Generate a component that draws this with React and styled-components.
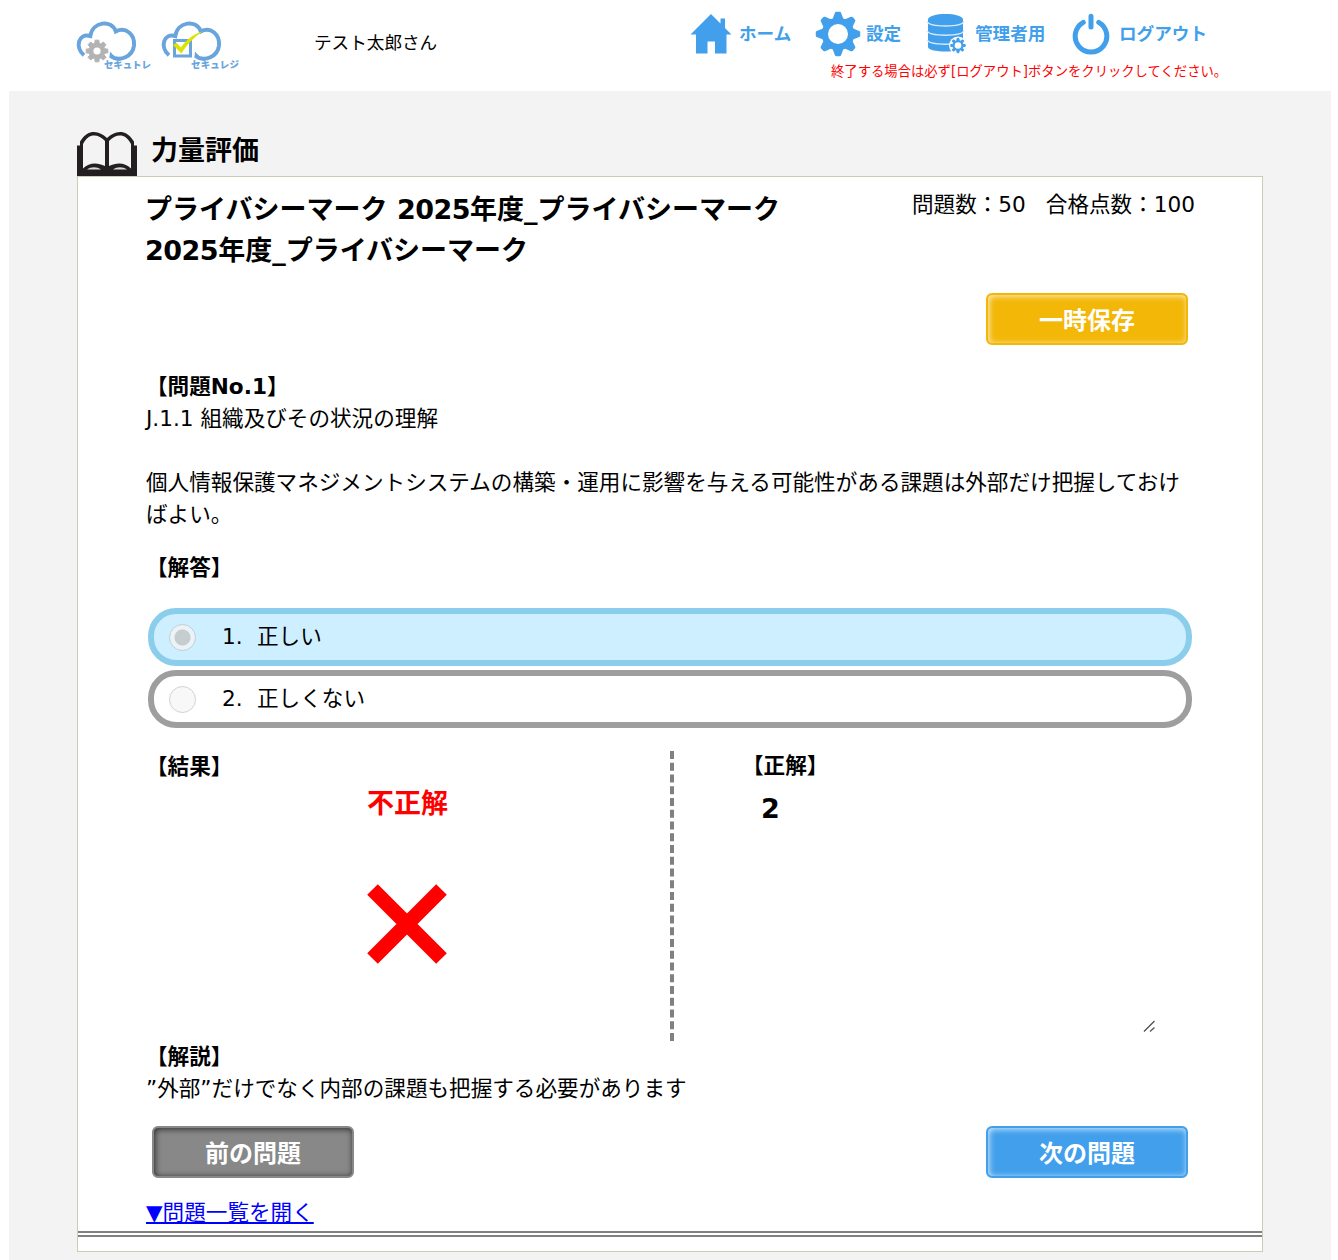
import React from 'react'
import styled, { createGlobalStyle } from 'styled-components'

const gearPath = (cx, cy, teeth, outer, inner, topW, baseW) => {
    const pts = []
    for (let i = 0; i < teeth; i++) {
        const a = (i * 2 * Math.PI) / teeth - Math.PI / 2
        const list = [[inner, -baseW], [outer, -topW], [outer, topW], [inner, baseW]]
        list.forEach(([r, d]) => {
            pts.push(`${(cx + r * Math.cos(a + d)).toFixed(2)} ${(cy + r * Math.sin(a + d)).toFixed(2)}`)
        })
    }
    return `M${pts.join('L')}Z`
}

const Cloud = () => (
    <path
        d="M10 38.2C0.5 30.5 4.5 15.5 16.3 19C18.5 4.5 37.5 2 41.8 14.4C52 9.5 61 17.5 60 28.5C58.8 39 46 46 36.3 38.8"
        fill="none"
        stroke="#69a5dc"
        strokeWidth="4"
        transform="translate(-2 -1)"
    />
)

const SecutoreLogo = () => (
    <svg width="78" height="54" viewBox="0 0 78 54">
        <Cloud />
        <path d="M34 33.5l5 5.5-5.5 0z" fill="#69a5dc" />
        <path d={gearPath(21, 33, 8, 11, 8, 0.17, 0.28)} fill="#b3b3b3" stroke="#b3b3b3" strokeWidth="1" strokeLinejoin="round" />
        <circle cx="21" cy="33" r="3.6" fill="#fff" />
        <LogoText x="28" y="49.5" textLength="47">セキュトレ</LogoText>
    </svg>
)

const SecuregiLogo = () => (
    <svg width="82" height="54" viewBox="0 0 82 54">
        <Cloud />
        <path d="M34 33.5l5 5.5-5.5 0z" fill="#69a5dc" />
        <rect x="13.5" y="22.5" width="16" height="15.5" fill="#fff" stroke="#69a5dc" strokeWidth="3" />
        <path d="M12 27l3.6-2.2 4.4 4.7C25 22 32 16 41.5 13.5 33 19 25.5 27 20.5 35.5z" fill="#dbe300" />
        <LogoText x="30" y="49.5" textLength="48">セキュレジ</LogoText>
    </svg>
)

const HomeIcon = () => (
    <svg width="42" height="42" viewBox="0 0 42 42">
        <path d="M21 1L30.5 10.5V5.5H35V15L41.5 21.5H36.5V40.5H25V28.5H17.5V40.5H6V21.5H.5Z" fill="#419fec" />
    </svg>
)

const GearIcon = () => (
    <svg width="46" height="46" viewBox="0 0 46 46">
        <path d={gearPath(23, 23, 8, 20.8, 15, 0.08, 0.27)} fill="#419fec" stroke="#419fec" strokeWidth="3" strokeLinejoin="round" />
        <circle cx="23" cy="23" r="10" fill="#fff" />
    </svg>
)

const DatabaseIcon = () => (
    <svg width="42" height="42" viewBox="0 0 42 42">
        <path d="M2 6.5C2 -1 37 -1 37 6.5V34C37 40 2 40 2 34Z" fill="#419fec" />
        <path d="M1 8.5C4 14.5 35 14.5 38 8.5M1 18C4 23.5 35 23.5 38 18M1 27C4 32.5 35 32.5 38 27" fill="none" stroke="#d5eafb" strokeWidth="1.5" />
        <circle cx="32" cy="32.5" r="9" fill="#fff" />
        <path d={gearPath(32, 32.5, 8, 7.3, 5, 0.12, 0.26)} fill="#419fec" stroke="#419fec" strokeWidth="1" />
        <circle cx="32" cy="32.5" r="3.3" fill="#fff" />
    </svg>
)

const PowerIcon = () => (
    <svg width="38" height="42" viewBox="0 0 38 42">
        <path d="M11.3 9.4A15.8 15.8 0 1 0 26.7 9.4M19 3.3V14" fill="none" stroke="#419fec" strokeWidth="5" strokeLinecap="round" />
    </svg>
)

const BookIcon = () => (
    <svg width="60" height="45" viewBox="0 0 60 45">
        <path d="M0 13.5H3V9.5C8 2 12 0 17 0C22 0 26 2.500 30 6C34 2.500 38 0 43 0C48 0 52 2 57 9.500V13.500H60V44H0Z" fill="#231f20" />
        <path d="M6 12C9 6 13 3.500 17 3.500C21 3.500 25 5.500 28 9V34C20 30 12 30.500 6 36.500Z" fill="#f3f3f3" />
        <path d="M54 12C51 6 47 3.500 43 3.500C39 3.500 35 5.500 32 9V34C40 30 48 30.500 54 36.500Z" fill="#f3f3f3" />
        <path d="M10 37.500C14 34.500 20 34.500 24 37.500ZM36 37.500C40 34.500 46 34.500 50 37.500Z" fill="#d8d8d8" />
    </svg>
)

const navItems = [
    { label: 'ホーム', icon: <HomeIcon />, width: 125, gap: 7 },
    { label: '設定', icon: <GearIcon />, width: 111, gap: 5 },
    { label: '管理者用', icon: <DatabaseIcon />, width: 146, gap: 7 },
    { label: 'ログアウト', icon: <PowerIcon />, width: 136, gap: 9 },
]

const options = [
    { no: 1, text: '正しい', checked: true },
    { no: 2, text: '正しくない', checked: false },
]

const App = () => {
    return (
        <>
            <GlobalStyle />
            <Header>
                <Logos>
                    <SecutoreLogo />
                    <SecuregiLogo />
                </Logos>
                <UserName>テスト太郎さん</UserName>
                <NavArea>
                    <Nav>
                        {navItems.map((item) => (
                            <NavLink key={item.label} $width={item.width} $gap={item.gap}>
                                {item.icon}
                                <span>{item.label}</span>
                            </NavLink>
                        ))}
                    </Nav>
                    <Notice>終了する場合は必ず[ログアウト]ボタンをクリックしてください。</Notice>
                </NavArea>
            </Header>
            <Main>
                <PageHead>
                    <BookIcon />
                    <h1>力量評価</h1>
                </PageHead>
                <Panel>
                    <Content>
                        <TitleRow>
                            <Title>
                                プライバシーマーク <Latin>2025</Latin>年度_プライバシーマーク<br />
                                <Latin>2025</Latin>年度_プライバシーマーク
                            </Title>
                            <Info>
                                <span>問題数：50</span>
                                <span>合格点数：100</span>
                            </Info>
                        </TitleRow>
                        <SaveRow>
                            <Button $color="#f3b707">一時保存</Button>
                        </SaveRow>
                        <Heading>【問題No.1】</Heading>
                        <Text>J.1.1 組織及びその状況の理解</Text>
                        <Question>
                            個人情報保護マネジメントシステムの構築・運用に影響を与える可能性がある課題は外部だけ把握しておけばよい。
                        </Question>
                        <Heading>【解答】</Heading>
                        <Options>
                            {options.map((o) => (
                                <Option key={o.no} $checked={o.checked}>
                                    <Radio $checked={o.checked} />
                                    <OptionNo>{o.no}.</OptionNo>
                                    <span>{o.text}</span>
                                </Option>
                            ))}
                        </Options>
                        <ResultRow>
                            <ResultCol>
                                <Heading>【結果】</Heading>
                                <Judge>不正解</Judge>
                                <Cross width="80" height="80" viewBox="0 0 80 80">
                                    <path d="M5.500 5.500L74.500 74.500M74.500 5.500L5.500 74.500" stroke="#f00" strokeWidth="15" />
                                </Cross>
                            </ResultCol>
                            <AnswerCol>
                                <Heading>【正解】</Heading>
                                <Answer>2</Answer>
                                <Grip width="13" height="13" viewBox="0 0 13 13">
                                    <path d="M1 11.500L11.500 1M7 11.500L11.500 7.500" stroke="#555" strokeWidth="1.400" />
                                </Grip>
                            </AnswerCol>
                        </ResultRow>
                        <Heading>【解説】</Heading>
                        <Text>”外部”だけでなく内部の課題も把握する必要があります</Text>
                        <ButtonRow>
                            <Button $color="#888" $pressed>前の問題</Button>
                            <Button $color="#419fec">次の問題</Button>
                        </ButtonRow>
                        <ListLink href="#">▼問題一覧を開く</ListLink>
                    </Content>
                    <Rule />
                </Panel>
            </Main>
        </>
    )
}

const GlobalStyle = createGlobalStyle`
    body {
        margin: 0;
        background: #fff;
        color: #000;
        font-family: 'DejaVu Sans', 'Noto Sans CJK JP', sans-serif;
        font-size: 21.6px;
        line-height: 32px;
        overflow: hidden;
    }
    svg {
        display: block;
        flex-shrink: 0;
    }
`

const Header = styled.header`
    display: flex;
    height: 91px;
`

const Logos = styled.div`
    display: flex;
    gap: 7px;
    padding: 18px 0 0 76px;
`

const LogoText = styled.text`
    font-family: 'Noto Sans CJK JP', sans-serif;
    font-size: 9.5px;
    font-weight: 900;
    fill: #69a5dc;
`

const UserName = styled.div`
    width: 447px;
    padding: 27px 0 0 71px;
    box-sizing: border-box;
    font-size: 17.6px;
`

const NavArea = styled.div`
    width: 541px;
    padding-top: 11px;
`

const Nav = styled.nav`
    display: flex;
    height: 46px;
`

const NavLink = styled.a`
    display: flex;
    align-items: center;
    width: ${({ $width }) => $width}px;
    gap: ${({ $gap }) => $gap}px;
    color: #419fec;
    font-size: 17.6px;
    font-weight: bold;
    white-space: nowrap;
`

const Notice = styled.p`
    margin: 5px 0 0 141px;
    color: #f00;
    font-size: 13.33px;
    line-height: 20px;
    white-space: nowrap;
`

const Main = styled.main`
    margin: 0 7px 0 9px;
    padding: 41px 68px 9px;
    background: #f3f3f3;
`

const PageHead = styled.div`
    display: flex;
    height: 44px;
    gap: 14px;
    h1 {
        margin: 0;
        font-size: 27px;
        line-height: 38px;
    }
`

const Panel = styled.section`
    height: 1074px;
    border: 1px solid #c9cdb1;
    background: #fff;
`

const Content = styled.div`
    padding: 12px 67px 0 68px;
`

const TitleRow = styled.div`
    display: flex;
    justify-content: space-between;
`

const Title = styled.h2`
    margin: 0 0 0 -1px;
    font-size: 27px;
    line-height: 41px;
`

const Latin = styled.span`
    letter-spacing: -0.5px;
`

const Info = styled.div`
    display: flex;
    gap: 20px;
    white-space: nowrap;
`

const SaveRow = styled.div`
    display: flex;
    justify-content: flex-end;
    margin: 22px 7px 26px 0;
`

const Button = styled.button`
    width: 202px;
    height: 52px;
    padding: 0 0 2px;
    border: 2px solid ${({ $color }) => $color};
    border-radius: 6px;
    background: ${({ $color }) => $color};
    box-shadow: inset 1px 1px 6px ${({ $pressed }) => ($pressed ? 'rgba(0, 0, 0, 0.7)' : 'rgba(255, 255, 255, 0.8)')};
    color: #fff;
    font-family: 'Noto Sans CJK JP', sans-serif;
    font-size: 24px;
    font-weight: bold;
`

const Heading = styled.h3`
    margin: 0;
    font-size: 21.6px;
    line-height: 32px;
`

const Text = styled.p`
    margin: 0;
`

const Question = styled(Text)`
    margin: 32px 0 21px;
`

const Options = styled.div`
    display: flex;
    flex-direction: column;
    gap: 4px;
    margin: 24px 3px 22px 2px;
`

const Option = styled.label`
    display: flex;
    align-items: center;
    height: 58px;
    padding-left: 15px;
    border: 6px solid ${({ $checked }) => ($checked ? '#8bceeb' : '#9e9e9e')};
    border-radius: 28px;
    background: ${({ $checked }) => ($checked ? '#ceefff' : '#fff')};
    box-sizing: border-box;
`

const Radio = styled.span`
    width: 27px;
    height: 27px;
    border: 1px solid ${({ $checked }) => ($checked ? '#c3ced3' : '#d2d2d2')};
    border-radius: 50%;
    background: ${({ $checked }) =>
        $checked ? 'radial-gradient(circle, #c5cdd1 7.5px, #ebf3f7 8.5px)' : '#f8f8f8'};
    box-sizing: border-box;
`

const OptionNo = styled.span`
    width: 35px;
    margin-left: 26px;
`

const ResultRow = styled.div`
    display: flex;
    height: 291px;
`

const ResultCol = styled.div`
    width: 524px;
    border-right: 4px dashed #808080;
    margin-top: 1px;
`

const Judge = styled.p`
    margin: 1px 0 0 221px;
    color: #f00;
    font-size: 27px;
    font-weight: bold;
    line-height: 40px;
`

const Cross = styled.svg`
    margin: 60px 0 0 221px;
`

const AnswerCol = styled.div`
    display: flex;
    flex-direction: column;
    width: 414px;
    padding-left: 68px;
`

const Answer = styled.p`
    flex: 1;
    margin: 7px 0 0 19px;
    font-size: 27px;
    font-weight: bold;
    line-height: 40px;
`

const Grip = styled.svg`
    align-self: flex-end;
    margin-bottom: 8px;
`

const ButtonRow = styled.div`
    display: flex;
    justify-content: space-between;
    margin: 21px 7px 19px 6px;
`

const ListLink = styled.a`
    display: block;
    width: fit-content;
    color: #00f;
    text-decoration: underline;
`

const Rule = styled.div`
    margin-top: 2px;
    border-top: 6px double #808080;
`

export default App
